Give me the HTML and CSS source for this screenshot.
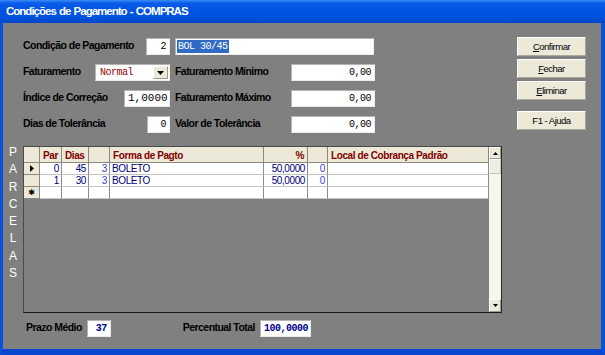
FILE: index.html
```html
<!DOCTYPE html>
<html lang="pt">

<head>
    <meta charset="UTF-8">
    <meta name="viewport" content="width=device-width, initial-scale=1.0">
    <title>Condições de Pagamento - COMPRAS</title>
    <link rel="stylesheet" href="styles.css">
</head>

<body>
    <div class="window">
        <div class="titlebar">Condições de Pagamento - COMPRAS</div>

        <div class="body">
            <div class="top">
                <div class="fields">
                    <div class="cell">
                        <span class="lbl">Condição de Pagamento</span>
                        <span class="inp w24">2</span>
                    </div>
                    <div class="cell">
                        <span class="inp wide"><span class="selected">BOL 30/45</span></span>
                    </div>

                    <div class="cell">
                        <span class="lbl">Faturamento</span>
                        <span class="combo">
                            <span class="combo-text">Normal</span>
                            <span class="combo-btn">
                                <svg width="7" height="4" viewBox="0 0 7 4"><path d="M0 0h7L3.5 4z" fill="#000"/></svg>
                            </span>
                        </span>
                    </div>
                    <div class="cell">
                        <span class="lbl">Faturamento Mínimo</span>
                        <span class="inp w84">0,00</span>
                    </div>

                    <div class="cell">
                        <span class="lbl">Índice de Correção</span>
                        <span class="inp w46 big">1,0000</span>
                    </div>
                    <div class="cell">
                        <span class="lbl">Faturamento Máximo</span>
                        <span class="inp w84">0,00</span>
                    </div>

                    <div class="cell">
                        <span class="lbl">Dias de Tolerância</span>
                        <span class="inp w23">0</span>
                    </div>
                    <div class="cell">
                        <span class="lbl">Valor de Tolerância</span>
                        <span class="inp w84">0,00</span>
                    </div>
                </div>

                <div class="buttons">
                    <button class="btn"><u>C</u>onfirmar</button>
                    <button class="btn"><u>F</u>echar</button>
                    <button class="btn"><u>E</u>liminar</button>
                    <button class="btn help">F1 - Ajuda</button>
                </div>
            </div>

            <div class="grid-area">
                <div class="side">
                    <span>P</span><span>A</span><span>R</span><span>C</span><span>E</span><span>L</span><span>A</span><span>S</span>
                </div>

                <div class="grid">
                    <div class="sheet">
                        <div class="hd sel-col"></div>
                        <div class="hd">Par</div>
                        <div class="hd">Dias</div>
                        <div class="hd"></div>
                        <div class="hd">Forma de Pagto</div>
                        <div class="hd right">%</div>
                        <div class="hd"></div>
                        <div class="hd">Local de Cobrança Padrão</div>

                        <div class="td sel-col">
                            <svg width="4" height="7" viewBox="0 0 4 7"><path d="M0 0l4 3.5L0 7z" fill="#000"/></svg>
                        </div>
                        <div class="td right">0</div>
                        <div class="td right">45</div>
                        <div class="td right light">3</div>
                        <div class="td">BOLETO</div>
                        <div class="td right">50,0000</div>
                        <div class="td right light">0</div>
                        <div class="td"></div>

                        <div class="td sel-col"></div>
                        <div class="td right">1</div>
                        <div class="td right">30</div>
                        <div class="td right light">3</div>
                        <div class="td">BOLETO</div>
                        <div class="td right">50,0000</div>
                        <div class="td right light">0</div>
                        <div class="td"></div>

                        <div class="td sel-col star">✱</div>
                        <div class="td"></div>
                        <div class="td"></div>
                        <div class="td"></div>
                        <div class="td"></div>
                        <div class="td"></div>
                        <div class="td"></div>
                        <div class="td"></div>
                    </div>

                    <div class="scroll">
                        <div class="sb-btn">
                            <svg width="5" height="3" viewBox="0 0 5 3"><path d="M0 3h5L2.5 0z" fill="#000"/></svg>
                        </div>
                        <div class="sb-thumb"></div>
                        <div class="sb-track"></div>
                        <div class="sb-btn down">
                            <svg width="5" height="3" viewBox="0 0 5 3"><path d="M0 0h5L2.5 3z" fill="#000"/></svg>
                        </div>
                    </div>
                </div>
            </div>

            <div class="footer">
                <span class="lbl">Prazo Médio</span>
                <span class="inp bold w24">37</span>
                <span class="lbl second">Percentual Total</span>
                <span class="inp bold w51">100,0000</span>
            </div>
        </div>
    </div>
</body>

</html>
```

FILE: styles.css
```css
* {
    box-sizing: border-box;
}

body {
    margin: 0;
    background: #ffffff;
    font-family: "Liberation Sans", Arial, sans-serif;
}

.window {
    width: 605px;
    height: 355px;
    display: flex;
    flex-direction: column;
}

.titlebar {
    flex: none;
    height: 23px;
    padding: 5px 0 0 6px;
    color: #ffffff;
    font-size: 11.5px;
    font-weight: bold;
    letter-spacing: -1px;
    word-spacing: 1px;
    background: linear-gradient(to bottom, #3a8cf6 0, #0a5ce8 3px, #0054e3 10px, #0052dc 18px, #0046c4 100%);
}

.body {
    flex: 1;
    background: #808080;
    border-left: 3px solid #0a52dc;
    border-right: 4px solid #0a52dc;
    border-bottom: 6px solid #0848d0;
}

/* top block: fields + buttons */
.top {
    display: flex;
    justify-content: space-between;
    padding: 14px 15px 0 20px;
}

.fields {
    display: grid;
    grid-template-columns: 147px 200px;
    grid-template-rows: repeat(4, 17px);
    column-gap: 5px;
    row-gap: 9px;
    margin-top: 1px;
}

.cell {
    display: flex;
    justify-content: space-between;
    align-items: flex-start;
}

.lbl {
    font-size: 10.5px;
    font-weight: bold;
    letter-spacing: -0.55px;
    color: #000000;
    line-height: 13px;
    padding-top: 1px;
    white-space: nowrap;
}

.inp {
    display: block;
    height: 17px;
    padding: 0 3px;
    background: #ffffff;
    border: 1px solid;
    border-color: #b4b4b4 #ececec #ececec #b4b4b4;
    font-family: "Liberation Mono", monospace;
    font-size: 10px;
    letter-spacing: -0.5px;
    line-height: 15px;
    text-align: right;
    color: #000000;
    white-space: nowrap;
}

.inp.big {
    font-size: 11px;
    letter-spacing: 0;
}

.inp.bold {
    font-weight: bold;
    color: #000090;
}

.w23 { width: 23px; }
.w24 { width: 24px; }
.w46 { width: 46px; }
.w51 { width: 51px; }
.w84 { width: 84px; }

.inp.wide {
    width: 199px;
    text-align: left;
    padding-left: 1px;
}

.selected {
    background: #316ac5;
    color: #ffffff;
    padding: 1px 1px;
}

.combo {
    width: 75px;
    height: 17px;
    display: flex;
    align-items: center;
    justify-content: space-between;
    padding: 1px 1px 1px 4px;
    background: #ffffff;
    border: 1px solid;
    border-color: #b4b4b4 #ececec #ececec #b4b4b4;
}

.combo-text {
    font-family: "Liberation Mono", monospace;
    font-size: 10px;
    letter-spacing: -0.5px;
    color: #9a0000;
}

.combo-btn {
    width: 15px;
    height: 13px;
    display: flex;
    align-items: center;
    justify-content: center;
    background: #ece9d8;
    border: 1px solid;
    border-color: #ffffff #9c9a8c #9c9a8c #ffffff;
}

.buttons {
    width: 69px;
    display: flex;
    flex-direction: column;
    gap: 3px;
}

.btn {
    height: 19px;
    padding: 0;
    background: #ece9d8;
    border: 1px solid;
    border-color: #ffffff #aca899 #aca899 #ffffff;
    font-family: "Liberation Sans", Arial, sans-serif;
    font-size: 9.5px;
    letter-spacing: -0.5px;
    color: #000000;
}

.btn.help {
    margin-top: 8px;
}

/* parcelas grid */
.grid-area {
    display: flex;
    margin-top: 13px;
}

.side {
    width: 20px;
    margin-top: -2px;
    display: flex;
    flex-direction: column;
    align-items: center;
    color: #ffffff;
    font-size: 12px;
    line-height: 17.3px;
}

.grid {
    width: 479px;
    height: 167px;
    display: flex;
    border: 1px solid;
    border-color: #4a4a4a #2a2a2a #1a1a1a #4a4a4a;
}

.sheet {
    flex: 1;
    display: grid;
    grid-template-columns: 16px 22px 27px 21px 154px 44px 20px 161px;
    grid-template-rows: 16px;
    grid-auto-rows: 12px;
    align-content: start;
}

.hd {
    padding: 2px 3px 0;
    background: #ece9d8;
    border-right: 1px solid #8c8a7c;
    border-bottom: 1px solid #8c8a7c;
    color: #800000;
    font-size: 10px;
    font-weight: bold;
    letter-spacing: -0.4px;
    line-height: 13px;
    white-space: nowrap;
}

.td {
    padding: 0 2px;
    background: #ffffff;
    border-right: 1px solid #8c8c8c;
    border-bottom: 1px solid #c4c4c4;
    color: #000080;
    font-size: 10px;
    letter-spacing: -0.4px;
    line-height: 11px;
    white-space: nowrap;
}

.right {
    text-align: right;
}

.light {
    color: #3c3cd0;
}

.sel-col {
    display: flex;
    align-items: center;
    justify-content: center;
    background: #ece9d8;
    border-right-color: #8c8a7c;
    border-bottom-color: #8c8a7c;
}

.star {
    font-family: "DejaVu Sans", sans-serif;
    font-size: 8px;
    color: #000000;
}

.scroll {
    width: 12px;
    display: flex;
    flex-direction: column;
    background: #f6f5ee;
}

.sb-btn {
    height: 12px;
    display: flex;
    align-items: center;
    justify-content: center;
    background: #ece9d8;
    border: 1px solid;
    border-color: #ffffff #9c9a8c #9c9a8c #ffffff;
}

.sb-btn.down {
    height: 13px;
}

.sb-thumb {
    height: 15px;
    background: #efeee4;
    border: 1px solid;
    border-color: #ffffff #c8c6b8 #c8c6b8 #ffffff;
}

.sb-track {
    flex: 1;
}

/* bottom totals */
.footer {
    display: flex;
    align-items: flex-start;
    margin-top: 7px;
    padding-left: 23px;
}

.footer .lbl {
    margin-right: 5px;
}

.footer .second {
    margin-left: 72px;
}
```
